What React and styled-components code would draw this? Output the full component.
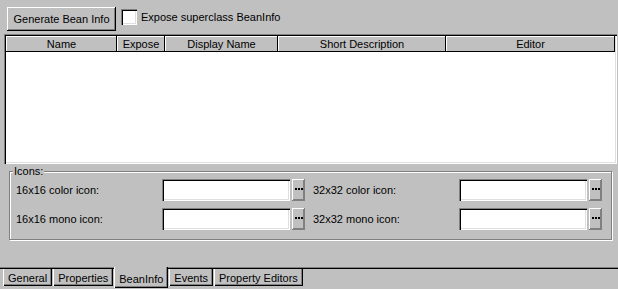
import React from 'react'
import styled, { createGlobalStyle } from 'styled-components'

const GlobalStyle = createGlobalStyle`
    html, body {
        margin: 0;
        padding: 0;
        background: #c0c0c0;
    }
    body {
        font-family: "Liberation Sans", Arial, sans-serif;
        font-size: 11px;
        color: #000;
    }
`

const raised = `
    box-shadow: inset -1px -1px #000, inset 1px 1px #fff, inset -2px -2px #808080;
`

const sunken = `
    box-shadow: inset 1px 1px #808080, inset 2px 2px #000, inset -1px -1px #fff, inset -2px -2px #dfdfdf;
`

const Window = styled.div`
    width: 618px;
    height: 289px;
    display: flex;
    flex-direction: column;
    overflow: hidden;
    background: #c0c0c0;
`

const Toolbar = styled.div`
    height: 34px;
    box-sizing: border-box;
    padding: 7px 0 0 7px;
    display: flex;
    align-items: flex-start;
`

const PushButton = styled.button`
    width: 109px;
    height: 24px;
    padding: 0;
    border: none;
    background: #c0c0c0;
    font: inherit;
    color: #000;
    ${raised}
`

const CheckWrap = styled.label`
    display: flex;
    align-items: center;
    gap: 4px;
    margin: 2px 0 0 5px;
    height: 16px;
`

const CheckBox = styled.span`
    width: 16px;
    height: 16px;
    background: #fff;
    ${sunken}
`

const Table = styled.div`
    height: 130px;
    margin: 0 1px 0 4px;
    box-sizing: border-box;
    padding: 2px;
    background: #fff;
    ${sunken}
`

const HeaderRow = styled.div`
    display: flex;
    height: 16px;
`

const HeaderCell = styled.div`
    width: ${({ w }) => w}px;
    flex: none;
    display: flex;
    align-items: center;
    justify-content: center;
    background: #c0c0c0;
    box-shadow: inset -1px -1px #000, inset 1px 1px #fff;
    white-space: nowrap;
`

const GroupBox = styled.div`
    position: relative;
    margin: 7px 0 0 9px;
    width: 603px;
    height: 69px;
    box-sizing: border-box;
    border: 1px solid #808080;
    box-shadow: inset 1px 1px #fff, 1px 1px #fff;
    padding: 7px 0 0 6px;
`

const Legend = styled.span`
    position: absolute;
    left: 3px;
    top: -7px;
    padding: 0 1px;
    background: #c0c0c0;
    line-height: 12px;
`

const FieldGrid = styled.div`
    display: grid;
    grid-template-columns: repeat(2, 289px);
    column-gap: 8px;
    row-gap: 7px;
`

const FieldRow = styled.div`
    display: flex;
    align-items: center;
    height: 22px;
`

const FieldLabel = styled.span`
    width: 146px;
    flex: none;
    white-space: nowrap;
`

const TextField = styled.div`
    width: 128px;
    height: 22px;
    flex: none;
    background: #fff;
    ${sunken}
`

const EllipsisButton = styled.button`
    width: 13px;
    height: 22px;
    margin-left: 2px;
    padding: 0 0 2px;
    border: none;
    background: #c0c0c0;
    display: flex;
    align-items: center;
    justify-content: center;
    gap: 1px;
    box-shadow: inset -1px -1px #808080, inset 1px 1px #fff, inset -2px -2px #808080;
`

const Dot = styled.i`
    width: 2px;
    height: 2px;
    background: #000;
`

const Spacer = styled.div`
    flex: 1;
`

const TabBar = styled.div`
    height: 22px;
    flex: none;
    box-sizing: border-box;
    border-top: 1px solid #808080;
    box-shadow: inset 0 1px #000;
    display: flex;
    align-items: flex-start;
    padding-left: 3px;
`

const Tab = styled.div`
    height: ${({ active }) => (active ? 21 : 17)}px;
    margin-top: ${({ active }) => (active ? -1 : 1)}px;
    padding: 0 5px;
    box-sizing: border-box;
    display: flex;
    align-items: center;
    padding-top: ${({ active }) => (active ? 3 : 0)}px;
    background: #c0c0c0;
    white-space: nowrap;
    box-shadow: inset 1px 0 #fff, inset -1px -1px #000, inset -2px -2px #808080;
    margin-right: ${({ active }) => (active ? 1 : 1)}px;
`

const columns = [
    ['Name', 111],
    ['Expose', 48],
    ['Display Name', 113],
    ['Short Description', 168],
    ['Editor', 169],
]

const iconFields = [
    '16x16 color icon:',
    '32x32 color icon:',
    '16x16 mono icon:',
    '32x32 mono icon:',
]

const tabs = ['General', 'Properties', 'BeanInfo', 'Events', 'Property Editors']

const App = () => {
    return (
        <React.Fragment>
            <GlobalStyle />
            <Window>
                <Toolbar>
                    <PushButton>Generate Bean Info</PushButton>
                    <CheckWrap>
                        <CheckBox />
                        Expose superclass BeanInfo
                    </CheckWrap>
                </Toolbar>
                <Table>
                    <HeaderRow>
                        {columns.map(([name, w]) => (
                            <HeaderCell key={name} w={w}>{name}</HeaderCell>
                        ))}
                    </HeaderRow>
                </Table>
                <GroupBox>
                    <Legend>Icons:</Legend>
                    <FieldGrid>
                        {iconFields.map(label => (
                            <FieldRow key={label}>
                                <FieldLabel>{label}</FieldLabel>
                                <TextField />
                                <EllipsisButton>
                                    <Dot /><Dot /><Dot />
                                </EllipsisButton>
                            </FieldRow>
                        ))}
                    </FieldGrid>
                </GroupBox>
                <Spacer />
                <TabBar>
                    {tabs.map(t => (
                        <Tab key={t} active={t === 'BeanInfo'}>{t}</Tab>
                    ))}
                </TabBar>
            </Window>
        </React.Fragment>
    )
}

export default App
